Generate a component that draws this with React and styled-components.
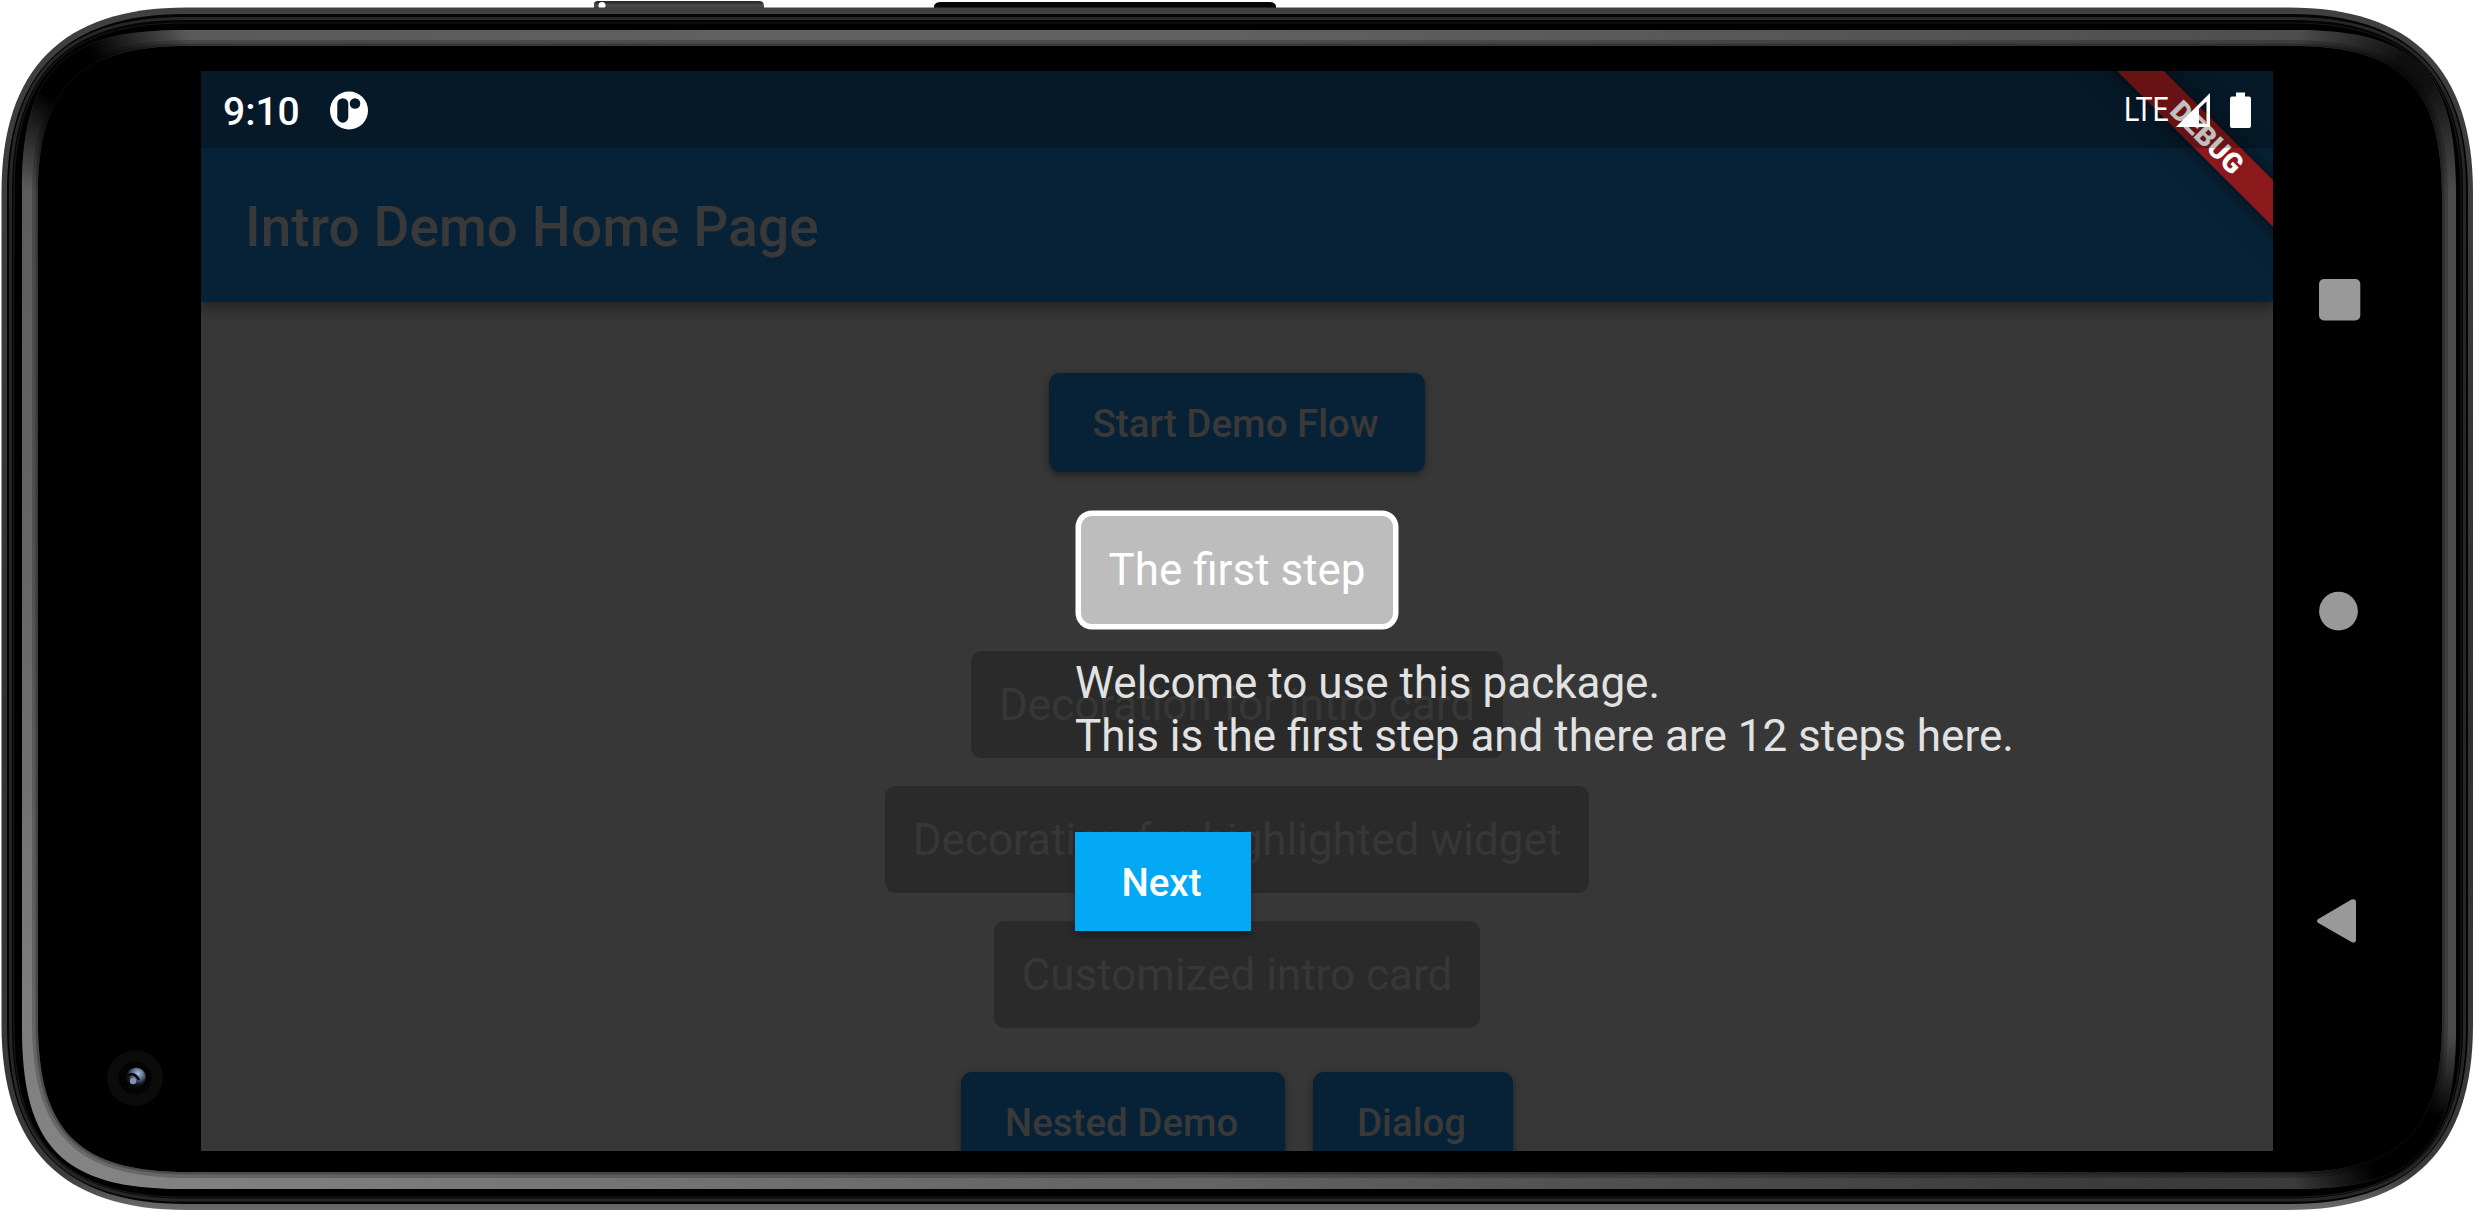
import React from "react";
import styled, { createGlobalStyle, css } from "styled-components";

const GlobalStyle = createGlobalStyle`
  * { box-sizing: border-box; }
  html, body { margin: 0; background: #fff; overflow: hidden; }
  body { font-family: Roboto, "Noto Sans", sans-serif; }
`;

const Device = styled.div`
  position: relative;
  display: flex;
  width: 2474px;
  height: 1211px;
  padding: 71px 0 60px 201px;
  overflow: hidden;
`;

const FrameArt = styled.svg`
  position: absolute;
  inset: 0;
  width: 2474px;
  height: 1211px;
`;

const Screen = styled.main`
  position: relative;
  display: flex;
  flex-direction: column;
  width: 2072px;
  height: 1080px;
  background: #373737;
  overflow: hidden;
`;

const StatusBar = styled.header`
  position: absolute;
  inset: 0 0 auto 0;
  z-index: 4;
  display: flex;
  align-items: center;
  height: 77px;
  padding: 0 22px 0 22px;
  background: rgba(0, 0, 0, 0.25);
  color: #fff;
`;

const Clock = styled.span`
  width: 106px;
  font-size: 39px;
  font-weight: 500;
  line-height: 77px;
  padding-top: 5px;
  letter-spacing: 0;
`;

const StatusIcons = styled.div`
  display: flex;
  align-items: center;
  margin-left: auto;
`;

const Network = styled.span`
  width: 51px;
  font-size: 34px;
  font-weight: 400;
  line-height: 77px;
  white-space: nowrap;
  transform: scaleX(0.84);
  transform-origin: left center;
`;

const AppBar = styled.div`
  position: relative;
  z-index: 1;
  flex: none;
  display: flex;
  align-items: center;
  height: 231px;
  padding: 80px 44px 0;
  background: #072237;
  box-shadow: 0 5px 11px rgba(0, 0, 0, 0.32), 0 2px 22px rgba(0, 0, 0, 0.16);
`;

const Title = styled.h1`
  margin: 0;
  color: #393939;
  font-size: 55px;
  font-weight: 500;
  line-height: 64px;
  letter-spacing: 0.05px;
`;

const Body = styled.div`
  display: flex;
  flex-direction: column;
  align-items: center;
  gap: 27.5px;
  padding-top: 54.75px;
`;

const buttonBase = css`
  display: flex;
  align-items: center;
  justify-content: center;
  height: 99px;
  border: 0;
  font: 500 38.5px/45px Roboto, "Noto Sans", sans-serif;
  letter-spacing: 0;
  white-space: nowrap;
`;

const FilledButton = styled.button`
  ${buttonBase}
  margin: 16.5px 0;
  padding: 2px 47px 0 44px;
  border-radius: 11px;
  background: #072237;
  color: #393939;
  box-shadow: 0 4px 6px rgba(0, 0, 0, 0.28), 0 1px 8px rgba(0, 0, 0, 0.12);
`;

const ButtonRow = styled.div`
  display: flex;
  gap: 27.5px;
`;

const Chip = styled.div`
  height: 107.25px;
  padding: 28px 27.5px 27px;
  border-radius: 11px;
  background: ${(p) => (p.$active ? "#bdbdbd" : "#2a2a2a")};
  color: ${(p) => (p.$active ? "#fff" : "#373737")};
  box-shadow: ${(p) => (p.$active ? "0 0 0 5.5px #fff" : "none")};
  font-size: 44px;
  line-height: 52px;
  white-space: nowrap;
`;

const Guide = styled.section`
  position: absolute;
  z-index: 3;
  left: 874px;
  top: 586px;
  display: flex;
  flex-direction: column;
  align-items: flex-start;
  gap: 50px;
`;

const GuideText = styled.p`
  margin: 0;
  color: #e2e2e2;
  font-size: 44px;
  line-height: 53px;
  white-space: pre;
`;

const NextButton = styled.button`
  ${buttonBase}
  width: 176px;
  margin-top: 19px;
  padding: 1px 3px 0 0;
  background: #03a9f4;
  color: #fff;
  box-shadow: 0 5px 6px rgba(0, 0, 0, 0.3);
`;

const DebugRibbon = styled.div`
  position: absolute;
  z-index: 2;
  left: 1856px;
  top: 50px;
  width: 300px;
  height: 33px;
  transform: rotate(45deg);
  background: #8b181b;
  color: #fff;
  font-size: 28px;
  font-weight: 900;
  line-height: 33px;
  text-align: center;
  box-shadow: 0 0 24px rgba(0, 0, 0, 0.6);
`;

const NavRail = styled.nav`
  position: relative;
  display: flex;
  flex-direction: column;
  gap: 267px;
  padding: 206px 0 0 43px;
`;

const NavIcon = styled.svg`
  display: block;
  width: 46px;
  height: 44px;
  overflow: visible;
  fill: #999;
`;

function squircle(l, t, r, b, R, k) {
  const c = R * k;
  return `M${l + R} ${t}H${r - R}C${r - c} ${t} ${r} ${t + c} ${r} ${t + R}V${b - R}C${r} ${b - c} ${r - c} ${b} ${r - R} ${b}H${l + R}C${l + c} ${b} ${l} ${b - c} ${l} ${b - R}V${t + R}C${l} ${t + c} ${l + c} ${t} ${l + R} ${t}Z`;
}

const ringOuter = squircle(22, 30, 2456, 1189, 160, 0.26);
const ringInner = squircle(38, 46, 2442, 1172, 150, 0.27);

function DeviceFrame() {
  return (
    <FrameArt viewBox="0 0 2474 1211" aria-hidden="true">
      <defs>
        <linearGradient id="key" x1="0" y1="0" x2="0" y2="1">
          <stop offset="0" stopColor="#222" />
          <stop offset="0.5" stopColor="#4a4c4b" />
          <stop offset="1" stopColor="#333" />
        </linearGradient>
        <linearGradient id="ring" gradientUnits="userSpaceOnUse" x1="0" y1="1211" x2="700" y2="0">
          <stop offset="0" stopColor="#888" />
          <stop offset="0.4" stopColor="#666" />
          <stop offset="0.75" stopColor="#585858" />
          <stop offset="1" stopColor="#606060" />
        </linearGradient>
        <linearGradient id="ringDim" gradientUnits="userSpaceOnUse" x1="1200" y1="0" x2="2474" y2="0">
          <stop offset="0" stopColor="#000" stopOpacity="0" />
          <stop offset="1" stopColor="#000" stopOpacity="0.22" />
        </linearGradient>
        <linearGradient id="bottomDim" gradientUnits="userSpaceOnUse" x1="1200" y1="0" x2="2100" y2="0">
          <stop offset="0" stopColor="#000" stopOpacity="0" />
          <stop offset="1" stopColor="#000" stopOpacity="0.2" />
        </linearGradient>
        <radialGradient id="fadeTL" gradientUnits="userSpaceOnUse" cx="62" cy="66" r="130">
          <stop offset="0.25" stopColor="#000" />
          <stop offset="1" stopColor="#000" stopOpacity="0" />
        </radialGradient>
        <radialGradient id="fadeTR" gradientUnits="userSpaceOnUse" cx="2415" cy="70" r="125">
          <stop offset="0.15" stopColor="#000" stopOpacity="0.8" />
          <stop offset="1" stopColor="#000" stopOpacity="0" />
        </radialGradient>
        <radialGradient id="fadeBR" gradientUnits="userSpaceOnUse" cx="2415" cy="1155" r="125">
          <stop offset="0.35" stopColor="#000" />
          <stop offset="1" stopColor="#000" stopOpacity="0" />
        </radialGradient>
        <linearGradient id="rim" gradientUnits="userSpaceOnUse" x1="0" y1="0" x2="0" y2="1211">
          <stop offset="0" stopColor="#404040" />
          <stop offset="0.6" stopColor="#303030" />
          <stop offset="0.97" stopColor="#3a3a3a" />
          <stop offset="1" stopColor="#706c6a" />
        </linearGradient>
        <radialGradient id="lens" cx="0.6" cy="0.3" r="0.7">
          <stop offset="0" stopColor="#a9bfdd" />
          <stop offset="0.4" stopColor="#60718c" />
          <stop offset="0.75" stopColor="#151b27" />
          <stop offset="1" stopColor="#06070a" />
        </radialGradient>
        <clipPath id="ringClip">
          <path d={ringOuter + ringInner} clipRule="evenodd" />
        </clipPath>
      </defs>

      <path d="M594 10V4Q594 1 598 1H759Q764 1 764 6V10Z" fill="url(#key)" />
      <circle cx="602" cy="5.5" r="3.5" fill="#fff" />
      <path d="M934 10V6Q935 2 941 2H1269Q1275 2 1276 6V10Z" fill="#060606" />

      <path d={squircle(1.5, 7.5, 2473, 1210, 185, 0.33)} fill="url(#rim)" />
      <path d={squircle(7, 14, 2468, 1204, 178, 0.33)} fill="#040404" />
      <path d={squircle(10.5, 18.5, 2464.5, 1200, 172, 0.32)} fill="none" stroke="#262626" strokeWidth="3" />
      <path d={squircle(14, 23, 2461, 1197, 168, 0.31)} fill="#000" stroke="#181818" strokeWidth="1.2" />

      <path d={ringOuter + ringInner} fillRule="evenodd" fill="url(#ring)" />
      <g clipPath="url(#ringClip)">
        <rect x="1200" y="0" width="1274" height="1211" fill="url(#ringDim)" />
        <rect x="1200" y="1160" width="1274" height="40" fill="url(#bottomDim)" />
        <path d={ringInner} fill="none" stroke="#000" strokeOpacity="0.2" strokeWidth="12" />
        <path d={ringInner} fill="none" stroke="#000" strokeOpacity="0.25" strokeWidth="5" />
        <rect x="0" y="0" width="300" height="300" fill="url(#fadeTL)" />
        <rect x="2200" y="0" width="274" height="300" fill="url(#fadeTR)" />
        <rect x="2200" y="900" width="274" height="311" fill="url(#fadeBR)" />
      </g>

      <circle cx="135" cy="1078" r="28" fill="#0b0b0b" />
      <circle cx="135" cy="1078" r="16.5" fill="#030303" />
      <circle cx="136" cy="1077.5" r="9.8" fill="url(#lens)" />
      <path d="M127 1076Q134 1071 139 1080" fill="none" stroke="#07090d" strokeWidth="2.4" />
      <circle cx="133" cy="1081" r="3.2" fill="#8591b3" />
    </FrameArt>
  );
}

const AppGlyph = () => (
  <svg width="40" height="40" viewBox="0 0 40 40">
    <circle cx="20" cy="20.5" r="19" fill="#fff" />
    <rect x="8.3" y="8.2" width="11" height="24.5" rx="5.5" fill="#051929" />
    <circle cx="26" cy="13.500" r="5.3" fill="#051929" />
  </svg>
);

const Signal = () => (
  <svg width="36" height="36" viewBox="0 0 36 36">
    <path fillRule="evenodd" fill="#fff" d="M1 35L35 1V35ZM24 16.5V31.5H31.5V9.5Z" />
  </svg>
);

const Battery = styled.svg`
  margin-left: 19px;
`;

export default function App() {
  return (
    <Device>
      <GlobalStyle />
      <DeviceFrame />
      <Screen>
        <StatusBar>
          <Clock>9:10</Clock>
          <AppGlyph />
          <StatusIcons>
            <Network>LTE</Network>
            <Signal />
            <Battery width="21" height="36" viewBox="0 0 21 36">
              <path fill="#fff" d="M6 0.5H15V4.5H19Q21 4.5 21 6.5V34Q21 36 19 36H2Q0 36 0 34V6.5Q0 4.5 2 4.5H6Z" />
            </Battery>
          </StatusIcons>
        </StatusBar>
        <AppBar>
          <Title>Intro Demo Home Page</Title>
        </AppBar>
        <Body>
          <FilledButton>Start Demo Flow</FilledButton>
          <Chip $active>The first step</Chip>
          <Chip>Decoration for intro card</Chip>
          <Chip>Decoration for highlighted widget</Chip>
          <Chip>Customized intro card</Chip>
          <ButtonRow>
            <FilledButton>Nested Demo</FilledButton>
            <FilledButton>Dialog</FilledButton>
          </ButtonRow>
        </Body>
        <DebugRibbon>DEBUG</DebugRibbon>
        <Guide>
          <GuideText>{"Welcome to use this package.\nThis is the first step and there are 12 steps here."}</GuideText>
          <NextButton>Next</NextButton>
        </Guide>
      </Screen>
      <NavRail>
        <NavIcon viewBox="0 0 46 44">
          <rect x="3" y="2" width="41.3" height="41.5" rx="5" />
        </NavIcon>
        <NavIcon viewBox="0 0 46 44">
          <circle cx="22.5" cy="23.2" r="19.4" />
        </NavIcon>
        <NavIcon viewBox="0 0 46 44">
          <path d="M2.3 20L35.5 0.6Q40 -1 40 3.5V40.5Q40 45 35.5 43L2.3 24Q-0.5 22 2.3 20Z" />
        </NavIcon>
      </NavRail>
    </Device>
  );
}
